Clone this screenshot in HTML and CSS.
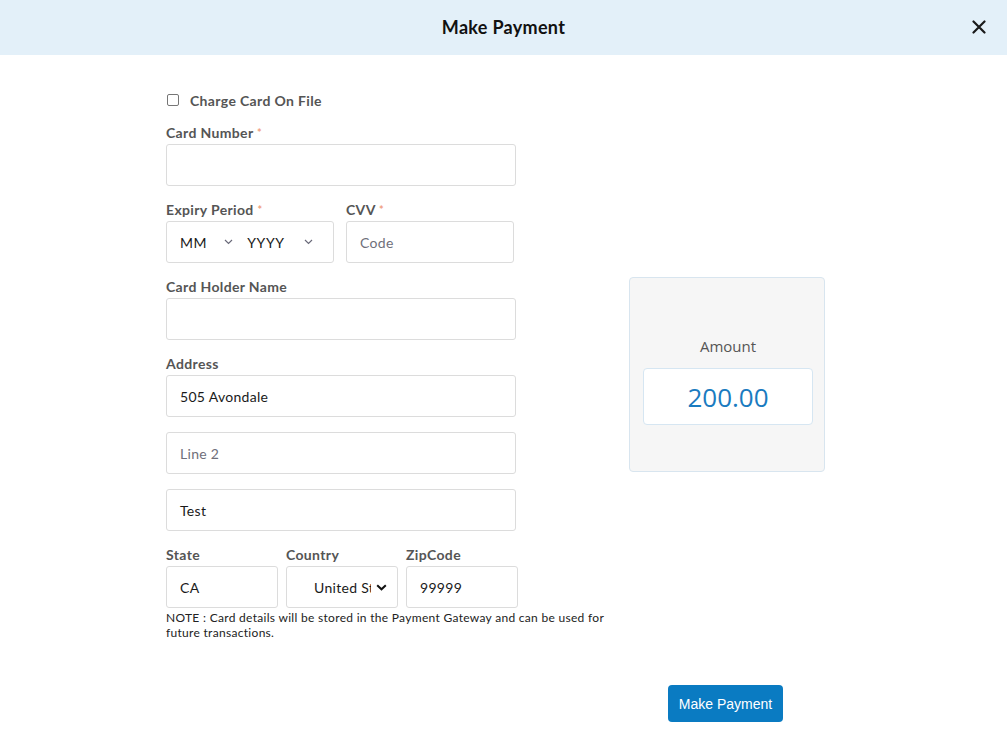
FILE: index.html
```html
<!DOCTYPE html>
<html>
<head>
<meta charset="utf-8">
<link rel="stylesheet" href="styles.css">
</head>
<body>
<header class="modal-header">
  <h1 class="title">Make Payment</h1>
  <button class="close" aria-label="Close">
    <svg width="14" height="14" viewBox="0 0 14 14"><path d="M1.5 1.5 L12.5 12.5 M12.5 1.5 L1.5 12.5" stroke="#1a1a1a" stroke-width="2.2" stroke-linecap="round"/></svg>
  </button>
</header>
<main class="content">
  <section class="form-col">
    <label class="check-row"><span class="checkbox"></span><span>Charge Card On File</span></label>

    <div class="field">
      <div class="label">Card Number <span class="req">*</span></div>
      <div class="input"></div>
    </div>

    <div class="row two">
      <div class="field">
        <div class="label">Expiry Period <span class="req">*</span></div>
        <div class="input expiry">
          <span class="sel">MM<svg class="chev" width="9" height="6" viewBox="0 0 9 6"><path d="M1 1 L4.5 4.5 L8 1" fill="none" stroke="#6a6a7a" stroke-width="1.2"/></svg></span>
          <span class="sel yyyy">YYYY<svg class="chev" width="9" height="6" viewBox="0 0 9 6"><path d="M1 1 L4.5 4.5 L8 1" fill="none" stroke="#6a6a7a" stroke-width="1.2"/></svg></span>
        </div>
      </div>
      <div class="field">
        <div class="label">CVV <span class="req">*</span></div>
        <div class="input placeholder">Code</div>
      </div>
    </div>

    <div class="field">
      <div class="label">Card Holder Name</div>
      <div class="input"></div>
    </div>

    <div class="field">
      <div class="label">Address</div>
      <div class="input">505 Avondale</div>
      <div class="input placeholder">Line 2</div>
      <div class="input">Test</div>
    </div>

    <div class="row three">
      <div class="field">
        <div class="label">State</div>
        <div class="input">CA</div>
      </div>
      <div class="field">
        <div class="label">Country</div>
        <div class="input country"><span class="ctext">United States</span><svg width="11" height="7" viewBox="0 0 11 7"><path d="M1.2 1.2 L5.5 5.3 L9.8 1.2" fill="none" stroke="#111" stroke-width="2"/></svg></div>
      </div>
      <div class="field">
        <div class="label">ZipCode</div>
        <div class="input">99999</div>
      </div>
    </div>
    <p class="note">NOTE : Card details will be stored in the Payment Gateway and can be used for future transactions.</p>
  </section>

  <aside class="amount-col">
    <div class="amount-card">
      <div class="amount-label">Amount</div>
      <div class="amount-value">200.00</div>
    </div>
  </aside>
</main>
<footer class="footer">
  <button class="pay-btn">Make Payment</button>
</footer>
</body>
</html>
```
FILE: styles.css
```css
* { box-sizing: border-box; }
html, body { margin: 0; padding: 0; background: #fff; }
body { font-family: Lato, "Open Sans", sans-serif; color: #222; }

.modal-header {
  height: 55px;
  background: #e3f0f9;
  display: flex;
  align-items: center;
  justify-content: center;
  position: relative;
}
.title { margin: 0 0 2px 0; font-size: 18px; font-weight: 700; color: #111; letter-spacing: 0.3px; }
.close {
  position: absolute;
  right: 21px;
  top: 20px;
  width: 14px; height: 14px;
  padding: 0; border: 0; background: none;
  display: flex;
}

.content {
  display: flex;
  align-items: flex-start;
  padding: 35px 0 0 166px;
}
.form-col { width: 440px; }

.check-row {
  display: flex;
  align-items: center;
  gap: 11px;
  height: 20px;
  font-size: 14px;
  letter-spacing: 0.35px;
  font-weight: 700;
  color: #555;
  margin-bottom: 15px;
}
.checkbox {
  width: 12px; height: 12px;
  border: 1px solid #767676;
  border-radius: 2px;
  margin-left: 1px;
  background: #fff;
}

.field { margin-bottom: 16px; width: 350px; }
.label {
  font-size: 14px;
  letter-spacing: 0.35px;
  font-weight: 700;
  color: #555;
  line-height: 16px;
  margin-bottom: 3px;
}
.req { color: #f0a080; font-size: 11px; vertical-align: top; letter-spacing: 0; }

.input {
  height: 42px;
  border: 1px solid #dcdcdc;
  border-radius: 3px;
  display: flex;
  align-items: center;
  padding-left: 13px;
  font-size: 14px;
  letter-spacing: 0.3px;
  color: #1a1a1a;
  background: #fff;
}
.input + .input { margin-top: 15px; }
.placeholder { color: #6f6f7a; }

.row { display: flex; }
.row.two { gap: 12px; width: 350px; }
.row.two .field { width: 168px; }
.row.three { gap: 8px; }
.row.three .field { width: 112px; margin-bottom: 2px; }

.expiry { padding-left: 13px; }
.sel { display: inline-flex; align-items: center; color: #1a1a1a; letter-spacing: 0.6px; }
.sel .chev { margin-left: 17px; }
.sel.yyyy { margin-left: 14px; }
.sel.yyyy .chev { margin-left: 19px; }

.country { padding: 0 10px 0 27px; justify-content: space-between; }
.ctext { width: 57px; overflow: hidden; white-space: nowrap; }

.note {
  margin: 0;
  font-size: 12px;
  letter-spacing: 0.3px;
  line-height: 15px;
  color: #222;
}

.amount-col { margin-left: 23px; margin-top: 187px; }
.amount-card {
  width: 196px;
  height: 195px;
  background: #f6f6f6;
  border: 1px solid #d8e5ef;
  border-radius: 4px;
  padding: 58px 11px 0 13px;
  font-family: "Open Sans", sans-serif;
}
.amount-label {
  text-align: center;
  font-size: 15px;
  color: #555;
  line-height: 20px;
  margin-bottom: 12px;
}
.amount-value {
  height: 57px;
  background: #fff;
  border: 1px solid #d6e6f2;
  border-radius: 4px;
  display: flex;
  align-items: center;
  justify-content: center;
  font-size: 26px;
  color: #1a7bc0;
}

.footer { padding: 45px 0 0 668px; }
.pay-btn {
  width: 115px;
  height: 37px;
  background: #0a7bc2;
  color: #fff;
  border: 0;
  border-radius: 4px;
  font-family: "Liberation Sans", Arial, sans-serif;
  font-size: 14px;
  padding: 0;
}
```
